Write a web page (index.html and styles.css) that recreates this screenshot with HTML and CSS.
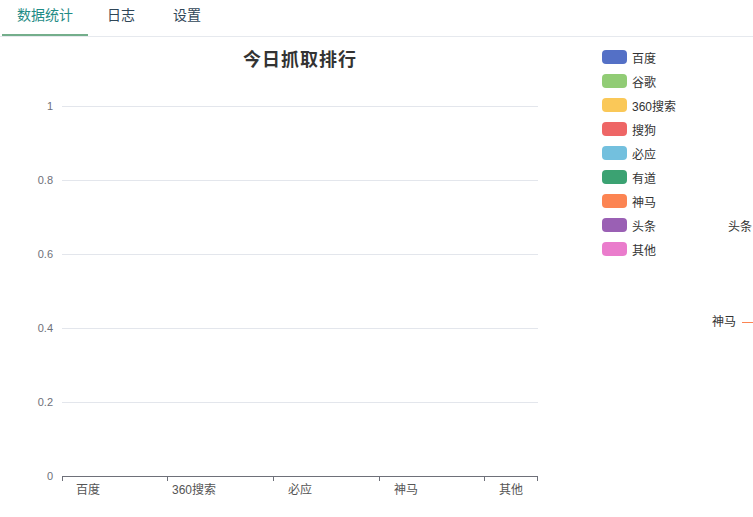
FILE: index.html
```html
<!DOCTYPE html>
<html lang="zh-CN">
<head>
    <meta charset="UTF-8">
    <meta name="viewport" content="width=device-width, initial-scale=1.0">
    <title>数据统计</title>
    <link rel="stylesheet" href="styles.css">
</head>
<body>
    <div class="tabs">
        <div class="tab active">数据统计</div>
        <div class="tab">日志</div>
        <div class="tab">设置</div>
    </div>
    <div class="panel">
        <div class="chart">
            <div class="chart-title">今日抓取排行</div>
            <svg class="chart-svg" width="600" height="437" viewBox="0 0 600 437">
                <g class="grid">
                    <line x1="62" y1="26.5" x2="538" y2="26.5"></line>
                    <line x1="62" y1="100.5" x2="538" y2="100.5"></line>
                    <line x1="62" y1="174.5" x2="538" y2="174.5"></line>
                    <line x1="62" y1="248.5" x2="538" y2="248.5"></line>
                    <line x1="62" y1="322.5" x2="538" y2="322.5"></line>
                </g>
                <g class="y-labels">
                    <text x="53" y="30">1</text>
                    <text x="53" y="104">0.8</text>
                    <text x="53" y="178">0.6</text>
                    <text x="53" y="252">0.4</text>
                    <text x="53" y="326">0.2</text>
                    <text x="53" y="400">0</text>
                </g>
                <g class="axis">
                    <line x1="62" y1="396.5" x2="538" y2="396.5"></line>
                    <line x1="62.5" y1="396" x2="62.5" y2="401"></line>
                    <line x1="167.5" y1="396" x2="167.5" y2="401"></line>
                    <line x1="273.5" y1="396" x2="273.5" y2="401"></line>
                    <line x1="379.5" y1="396" x2="379.5" y2="401"></line>
                    <line x1="484.5" y1="396" x2="484.5" y2="401"></line>
                    <line x1="537.5" y1="396" x2="537.5" y2="401"></line>
                </g>
                <g class="x-labels">
                    <text x="88" y="414">百度</text>
                    <text x="194" y="414">360搜索</text>
                    <text x="300" y="414">必应</text>
                    <text x="406" y="414">神马</text>
                    <text x="511" y="414">其他</text>
                </g>
            </svg>
        </div>
        <ul class="legend">
            <li><span class="swatch" style="background:#5470c6"></span>百度</li>
            <li><span class="swatch" style="background:#91cc75"></span>谷歌</li>
            <li><span class="swatch" style="background:#fac858"></span>360搜索</li>
            <li><span class="swatch" style="background:#ee6666"></span>搜狗</li>
            <li><span class="swatch" style="background:#73c0de"></span>必应</li>
            <li><span class="swatch" style="background:#3ba272"></span>有道</li>
            <li><span class="swatch" style="background:#fc8452"></span>神马</li>
            <li><span class="swatch" style="background:#9a60b4"></span>头条</li>
            <li><span class="swatch" style="background:#ea7ccc"></span>其他</li>
        </ul>
        <span class="pie-label toutiao">头条</span>
        <span class="pie-label shenma">神马<i class="pie-line"></i></span>
    </div>
</body>
</html>
```

FILE: styles.css
```css
body {
    font-family: "Liberation Sans", "Noto Sans CJK SC", sans-serif;
    background: #ffffff;
    margin: 0;
    padding: 0;
    color: #333;
    overflow: hidden;
}

.tabs {
    display: flex;
    padding-left: 2px;
    border-bottom: 1px solid #e6e9ee;
}

.tab {
    height: 34px;
    line-height: 31px;
    padding: 0 19px;
    font-size: 14px;
    color: #2f4657;
    border-bottom: 2px solid transparent;
}

.tab:first-child {
    padding: 0 15px;
}

.tab.active {
    color: #1f8c86;
    border-bottom-color: #74ae8b;
}

.panel {
    position: relative;
    display: flex;
}

.chart {
    width: 600px;
}

.chart-title {
    height: 43px;
    line-height: 46px;
    text-align: center;
    font-size: 18px;
    letter-spacing: 1px;
    font-weight: bold;
    color: #333;
}

.chart-svg {
    display: block;
}

.grid line {
    stroke: #e3e6ec;
    stroke-width: 1;
}

.axis line {
    stroke: #6e7079;
    stroke-width: 1;
}

.y-labels text {
    font-size: 11px;
    fill: #6e7079;
    text-anchor: end;
}

.x-labels text {
    font-size: 12px;
    fill: #555;
    text-anchor: middle;
}

.legend {
    list-style: none;
    margin: 8px 0 0 2px;
    padding: 0;
}

.legend li {
    display: flex;
    align-items: center;
    height: 24px;
    font-size: 12px;
    color: #333;
    white-space: nowrap;
}

.swatch {
    width: 25px;
    height: 14px;
    border-radius: 4px;
    margin-right: 5px;
}

.pie-label {
    position: absolute;
    font-size: 12px;
    color: #333;
    line-height: 14px;
    white-space: nowrap;
}

.toutiao {
    left: 728px;
    top: 183px;
}

.shenma {
    left: 712px;
    top: 278px;
    display: flex;
    align-items: center;
}

.pie-line {
    width: 12px;
    height: 1px;
    margin-left: 6px;
    background: #fc8452;
}
```
